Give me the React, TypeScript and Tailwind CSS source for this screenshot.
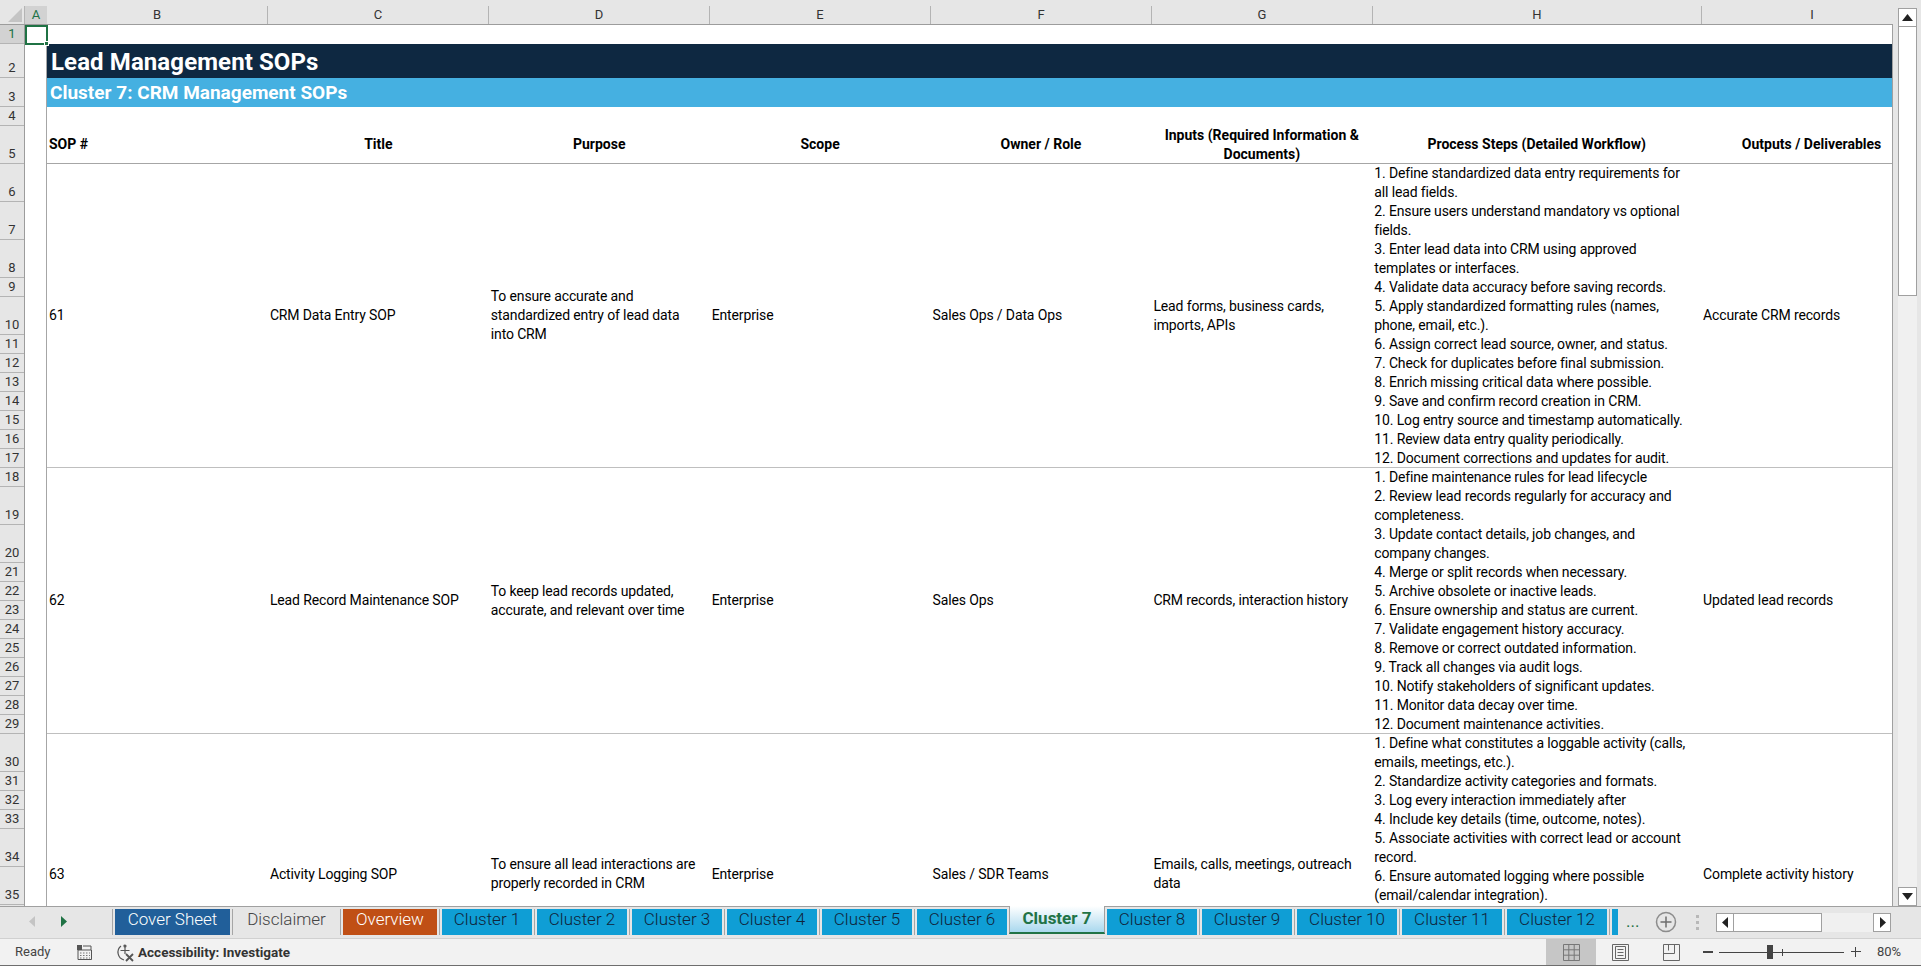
import React from 'react';

const rowHeaders: [string, number][] = [
  ['1', 19], ['2', 34], ['3', 29], ['4', 19], ['5', 38],
  ['6', 38], ['7', 38], ['8', 38], ['9', 19], ['10', 38],
  ['11', 19], ['12', 19], ['13', 19], ['14', 19], ['15', 19], ['16', 19], ['17', 19], ['18', 19],
  ['19', 38], ['20', 38],
  ['21', 19], ['22', 19], ['23', 19], ['24', 19], ['25', 19], ['26', 19], ['27', 19], ['28', 19], ['29', 19],
  ['30', 38], ['31', 19], ['32', 19], ['33', 19], ['34', 38], ['35', 38],
];

const columns: [string, string][] = [
  ['B', 'w-[221px]'], ['C', 'w-[221px]'], ['D', 'w-[221px]'], ['E', 'w-[221px]'],
  ['F', 'w-[221px]'], ['G', 'w-[221px]'], ['H', 'w-[329px]'], ['I', 'w-[221px]'],
];

const headings = ['SOP #', 'Title', 'Purpose', 'Scope', 'Owner / Role'];

const sops = [
  {
    id: '61',
    title: 'CRM Data Entry SOP',
    purpose: ['To ensure accurate and', 'standardized entry of lead data', 'into CRM'],
    scope: 'Enterprise',
    owner: 'Sales Ops / Data Ops',
    inputs: ['Lead forms, business cards,', 'imports, APIs'],
    output: 'Accurate CRM records',
    height: 'h-[304px]',
    steps: [
      '1. Define standardized data entry requirements for',
      'all lead fields.',
      '2. Ensure users understand mandatory vs optional',
      'fields.',
      '3. Enter lead data into CRM using approved',
      'templates or interfaces.',
      '4. Validate data accuracy before saving records.',
      '5. Apply standardized formatting rules (names,',
      'phone, email, etc.).',
      '6. Assign correct lead source, owner, and status.',
      '7. Check for duplicates before final submission.',
      '8. Enrich missing critical data where possible.',
      '9. Save and confirm record creation in CRM.',
      '10. Log entry source and timestamp automatically.',
      '11. Review data entry quality periodically.',
      '12. Document corrections and updates for audit.',
    ],
  },
  {
    id: '62',
    title: 'Lead Record Maintenance SOP',
    purpose: ['To keep lead records updated,', 'accurate, and relevant over time'],
    scope: 'Enterprise',
    owner: 'Sales Ops',
    inputs: ['CRM records, interaction history'],
    output: 'Updated lead records',
    height: 'h-[266px]',
    steps: [
      '1. Define maintenance rules for lead lifecycle',
      '2. Review lead records regularly for accuracy and',
      'completeness.',
      '3. Update contact details, job changes, and',
      'company changes.',
      '4. Merge or split records when necessary.',
      '5. Archive obsolete or inactive leads.',
      '6. Ensure ownership and status are current.',
      '7. Validate engagement history accuracy.',
      '8. Remove or correct outdated information.',
      '9. Track all changes via audit logs.',
      '10. Notify stakeholders of significant updates.',
      '11. Monitor data decay over time.',
      '12. Document maintenance activities.',
    ],
  },
  {
    id: '63',
    title: 'Activity Logging SOP',
    purpose: ['To ensure all lead interactions are', 'properly recorded in CRM'],
    scope: 'Enterprise',
    owner: 'Sales / SDR Teams',
    inputs: ['Emails, calls, meetings, outreach', 'data'],
    output: 'Complete activity history',
    height: 'h-[281px]',
    steps: [
      '1. Define what constitutes a loggable activity (calls,',
      'emails, meetings, etc.).',
      '2. Standardize activity categories and formats.',
      '3. Log every interaction immediately after',
      '4. Include key details (time, outcome, notes).',
      '5. Associate activities with correct lead or account',
      'record.',
      '6. Ensure automated logging where possible',
      '(email/calendar integration).',
    ],
  },
];

const tabs = [
  { name: 'Cover Sheet', cls: 'w-[115px] bg-[#215f9a] text-white' },
  { name: 'Disclaimer', cls: 'w-[103px] text-[#444444]' },
  { name: 'Overview', cls: 'w-[94px] bg-[#c04f15] text-white' },
  { name: 'Cluster 1', cls: 'w-[90px] bg-[#0f9ed5] text-[#10243a]' },
  { name: 'Cluster 2', cls: 'w-[90px] bg-[#0f9ed5] text-[#10243a]' },
  { name: 'Cluster 3', cls: 'w-[90px] bg-[#0f9ed5] text-[#10243a]' },
  { name: 'Cluster 4', cls: 'w-[90px] bg-[#0f9ed5] text-[#10243a]' },
  { name: 'Cluster 5', cls: 'w-[90px] bg-[#0f9ed5] text-[#10243a]' },
  { name: 'Cluster 6', cls: 'w-[90px] bg-[#0f9ed5] text-[#10243a]' },
];

const tabsAfter = [
  { name: 'Cluster 8', cls: 'w-[90px]' },
  { name: 'Cluster 9', cls: 'w-[90px]' },
  { name: 'Cluster 10', cls: 'w-[100px]' },
  { name: 'Cluster 11', cls: 'w-[100px]' },
  { name: 'Cluster 12', cls: 'w-[100px]' },
];

const Sep = () => <div className="w-px h-[26px] bg-[#a6a6a6] mx-[2px] shrink-0" />;

const ArrowBtn = ({ d, cls }: { d: string; cls: string }) => (
  <div className={`flex items-center justify-center bg-white border border-[#a0a0a0] ${cls}`}>
    <svg width="9" height="11" viewBox="0 0 9 11"><path d={d} fill="#222222" /></svg>
  </div>
);

function ColumnHeader() {
  return (
    <div className="flex h-[19px] shrink-0 overflow-hidden border-b border-[#9c9c9c] text-[13px] leading-[18px] text-[#333333]">
      <div className="w-[25px] shrink-0 relative border-r border-[#b4b4b4]">
        <svg className="absolute right-[2px] bottom-[2px]" width="14" height="14" viewBox="0 0 14 14">
          <path d="M14 0V14H0Z" fill="#c4c4c4" />
        </svg>
      </div>
      <div className="w-[22px] shrink-0 bg-[#d2d2d2] text-center text-[#217346]">A</div>
      {columns.map(([name, w]) => (
        <div key={name} className={`${w} shrink-0 text-center border-r border-[#b4b4b4]`}>{name}</div>
      ))}
    </div>
  );
}

function RowHeader() {
  return (
    <div className="w-[25px] shrink-0 border-r border-[#9c9c9c] overflow-hidden text-[13px] text-[#333333]">
      {rowHeaders.map(([n, h], i) => (
        <div
          key={n}
          style={{ height: h }}
          className={`flex items-end justify-center leading-[18px] border-b border-[#b4b4b4] ${i === 0 ? 'bg-[#d2d2d2] text-[#217346]' : ''}`}
        >
          {n}
        </div>
      ))}
    </div>
  );
}

function Sheet() {
  return (
    <div className="w-[1868px] shrink-0 bg-white relative overflow-hidden border-r border-[#a0a0a0] text-[14px] tracking-[-0.13px] leading-[19px] text-black">
      <div className="absolute left-0 top-0 w-[23px] h-[20px] border-2 border-[#1f7244] z-10">
        <div className="absolute right-[-3px] bottom-[-3px] w-[5px] h-[5px] bg-[#1f7244] border border-white" />
      </div>
      <div className="ml-[21px] border-l border-[#a6a6a6] w-[1876px] min-h-[1000px]">
        <div className="h-[19px]" />
        <div className="h-[34px] bg-[#0e2841] text-white text-[24px] tracking-[0.1px] font-bold leading-[36px] pl-[4px]">
          Lead Management SOPs
        </div>
        <div className="h-[29px] bg-[#45b0e1] text-white text-[19px] tracking-normal font-bold leading-[29px] pl-[3px]">
          Cluster 7: CRM Management SOPs
        </div>
        <div className="h-[19px]" />
        <div className="h-[38px] flex border-b border-[#a6a6a6] font-bold tracking-normal">
          <div className="w-[221px] px-[2px] flex items-center">{headings[0]}</div>
          {headings.slice(1).map((h) => (
            <div key={h} className="w-[221px] flex items-center justify-center text-center">{h}</div>
          ))}
          <div className="w-[221px] text-center">Inputs (Required Information &amp;<br />Documents)</div>
          <div className="w-[329px] flex items-center justify-center">Process Steps (Detailed Workflow)</div>
          <div className="w-[221px] flex items-center justify-center">Outputs / Deliverables</div>
        </div>
        {sops.map((s) => (
          <div key={s.id} className={`${s.height} flex items-center border-b border-[#bfbfbf]`}>
            <div className="w-[221px] px-[2px]">{s.id}</div>
            <div className="w-[221px] px-[2px]">{s.title}</div>
            <div className="w-[221px] px-[2px]">
              {s.purpose.map((l) => <div key={l} className="whitespace-nowrap">{l}</div>)}
            </div>
            <div className="w-[221px] px-[2px]">{s.scope}</div>
            <div className="w-[221px] px-[2px]">{s.owner}</div>
            <div className="w-[221px] px-[2px]">
              {s.inputs.map((l) => <div key={l} className="whitespace-nowrap">{l}</div>)}
            </div>
            <div className="w-[329px] px-[2px] self-start">
              {s.steps.map((l) => <div key={l} className="whitespace-nowrap">{l}</div>)}
            </div>
            <div className="w-[221px] px-[2px]">{s.output}</div>
          </div>
        ))}
      </div>
    </div>
  );
}

function VScroll() {
  return (
    <div className="flex-1 flex flex-col items-start pl-[5px] pt-[8px] bg-[#e6e6e6]">
      <div className="h-[19px] w-[19px] bg-white border border-[#a0a0a0] flex items-center justify-center shrink-0">
        <svg width="11" height="7" viewBox="0 0 11 7"><path d="M5.5 0 11 7H0Z" fill="#222222" /></svg>
      </div>
      <div className="w-[19px] flex-1 bg-[#f0f0f0] flex flex-col">
        <div className="h-[269px] bg-white border-x border-b border-[#a0a0a0]" />
      </div>
      <div className="h-[19px] w-[19px] bg-white border border-[#a0a0a0] flex items-center justify-center shrink-0">
        <svg width="11" height="7" viewBox="0 0 11 7"><path d="M5.5 7 11 0H0Z" fill="#222222" /></svg>
      </div>
    </div>
  );
}

function TabBar() {
  return (
    <div className="h-[33px] shrink-0 flex border-t border-[#a0a0a0] border-b border-b-[#d0d0d0] bg-[#e6e6e6] text-[17px] font-light">
      <div className="w-[110px] shrink-0 flex items-center pl-[29px] gap-[26px] pb-[2px]">
        <svg width="6" height="11" viewBox="0 0 6 11"><path d="M6 0V11L0 5.5Z" fill="#c4c4c4" /></svg>
        <svg width="6" height="11" viewBox="0 0 6 11"><path d="M0 0V11L6 5.5Z" fill="#1f7244" /></svg>
      </div>
      <div className="flex items-start pt-[2px] flex-1 min-w-0">
        <Sep />
        {tabs.map((t) => (
          <React.Fragment key={t.name}>
            <div className={`h-[26px] pb-[6px] shrink-0 flex items-center justify-center leading-none ${t.cls}`}>{t.name}</div>
            {t.name !== 'Cluster 6' && <Sep />}
          </React.Fragment>
        ))}
        <div className="w-[96px] h-[28px] ml-[2px] mt-[-3px] pb-[1px] shrink-0 flex items-center justify-center font-bold text-[#217346] bg-gradient-to-b from-white to-[#a9d8ee] border-b-2 border-[#217346] border-x border-x-[#a0a0a0]">
          Cluster 7
        </div>
        <div className="w-[2px] shrink-0" />
        {tabsAfter.map((t, i) => (
          <React.Fragment key={t.name}>
            {i > 0 && <Sep />}
            <div className={`h-[26px] pb-[6px] shrink-0 flex items-center justify-center leading-none bg-[#0f9ed5] text-[#10243a] ${t.cls}`}>{t.name}</div>
          </React.Fragment>
        ))}
        <Sep />
        <div className="w-[6px] h-[26px] bg-[#0f9ed5] shrink-0" />
        <div className="w-[37px] shrink-0 pl-[8px] font-normal text-[#1f7244] leading-[24px]">...</div>
        <svg className="shrink-0 mt-[1px]" width="22" height="24" viewBox="0 0 22 24">
          <circle cx="11" cy="12" r="9.5" fill="none" stroke="#8c8c8c" strokeWidth="1.5" />
          <path d="M11 6.5v11M5.5 12h11" stroke="#6e6e6e" strokeWidth="1.5" />
        </svg>
        <div className="w-[3px] h-[15px] mt-[6px] ml-[19px] shrink-0 border-y-[3px] border-[#b8b8b8] relative">
          <div className="absolute top-[3px] left-0 w-[3px] h-[3px] bg-[#b8b8b8]" />
        </div>
        <div className="ml-[17px] mt-[4px] w-[175px] h-[19px] shrink-0 flex bg-[#f0f0f0]">
          <ArrowBtn d="M7 0V11L1 5.5Z" cls="w-[18px]" />
          <div className="w-[88px] bg-white border-y border-r border-[#a0a0a0]" />
          <div className="flex-1" />
          <ArrowBtn d="M2 0V11L8 5.5Z" cls="w-[18px]" />
        </div>
      </div>
    </div>
  );
}

function StatusBar() {
  return (
    <div className="h-[27px] shrink-0 flex items-center bg-[#f2f2f2] border-b border-[#6e6e6e] text-[13px] text-[#444444]">
      <div className="pl-[15px] w-[77px]">Ready</div>
      <svg width="15" height="15" viewBox="0 0 15 15">
        <rect x="0" y="0" width="5" height="5" fill="#555555" />
        <path d="M6 1h8v4H1v9.5h13.5V5" fill="none" stroke="#555555" />
        <path d="M3 8h10M3 10.5h10M3 13h10" stroke="#777777" strokeDasharray="1.5 1.5" />
      </svg>
      <svg className="ml-[24px]" width="19" height="19" viewBox="0 0 19 19" fill="none" stroke="#555555" strokeWidth="1.2">
        <path d="M5 3A8 8 0 0 0 8 17" />
        <circle cx="9" cy="3" r="1" fill="#555555" />
        <path d="M4.5 7.5h9M9 4v7" />
        <path d="M10 11l7 7M17 11l-7 7" strokeWidth="1.8" />
      </svg>
      <div className="ml-[3px] font-bold text-[13.5px] text-[#333333]">Accessibility: Investigate</div>
      <div className="ml-auto h-full w-[50px] bg-[#c6c6c6] flex items-center justify-center">
        <svg width="17" height="17" viewBox="0 0 17 17" fill="none" stroke="#777777">
          <path d="M.5.5h16v16H.5zM5.8.5v16M11.2.5v16M.5 5.8h16M.5 11.2h16" />
        </svg>
      </div>
      <svg className="ml-[16px]" width="17" height="17" viewBox="0 0 17 17" fill="none" stroke="#666666">
        <path d="M.5.5h16v16H.5zM3.5 2.5h10v12h-10zM5.5 5.5h6M5.5 8.5h6M5.5 11.5h6" />
      </svg>
      <svg className="ml-[34px]" width="17" height="17" viewBox="0 0 17 17" fill="none" stroke="#666666">
        <path d="M.5.5h16v16H.5zM.5 9.5h11M11.5.5v9M5.5.5v6" />
      </svg>
      <div className="ml-[23px] w-[10px] h-[1.5px] bg-[#444444]" />
      <div className="ml-[6px] w-[125px] h-[1px] bg-[#444444] relative">
        <div className="absolute left-[48px] top-[-7px] w-[6px] h-[14px] bg-[#444444]" />
        <div className="absolute left-[63px] top-[-3px] w-px h-[7px] bg-[#444444]" />
      </div>
      <div className="ml-[7px] w-[10px] h-[10px] relative">
        <div className="absolute top-[4px] left-0 w-[10px] h-px bg-[#444444]" />
        <div className="absolute left-[4px] top-0 h-[10px] w-px bg-[#444444]" />
      </div>
      <div className="ml-[16px] w-[44px]">80%</div>
    </div>
  );
}

export default function App() {
  return (
    <div className="w-[1921px] h-[966px] overflow-hidden flex flex-col bg-[#e6e6e6] font-['Roboto',sans-serif]">
      <div className="flex h-[906px] shrink-0">
        <div className="w-[1893px] shrink-0 flex flex-col pt-[6px]">
          <ColumnHeader />
          <div className="flex h-[881px] shrink-0">
            <RowHeader />
            <Sheet />
          </div>
        </div>
        <VScroll />
      </div>
      <TabBar />
      <StatusBar />
    </div>
  );
}
